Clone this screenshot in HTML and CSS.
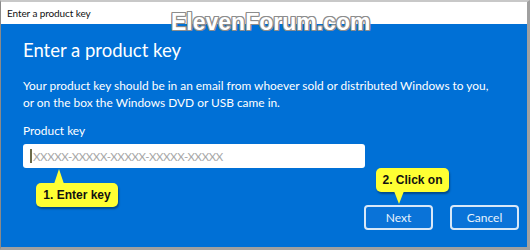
FILE: index.html
```html
<!DOCTYPE html>
<html lang="en">
<head>
  <meta charset="UTF-8" />
  <title>Enter a product key</title>
  <link rel="stylesheet" href="styles.css">
</head>
<body>
  <div class="window">
    <div class="titlebar">Enter a product key</div>
    <div class="content">
      <h1 class="heading">Enter a product key</h1>
      <p class="intro">Your product key should be in an email from whoever sold or distributed Windows to you,<br>or on the box the Windows DVD or USB came in.</p>
      <div class="label">Product key</div>
      <div class="keyInput"><span class="caret"></span><span class="placeholder">XXXXX-XXXXX-XXXXX-XXXXX-XXXXX</span></div>
      <div class="buttons">
        <button class="btn">Next</button>
        <button class="btn">Cancel</button>
      </div>
    </div>

    <div class="watermark">ElevenForum.com</div>

    <div class="callout callout-up">1. Enter key</div>
    <div class="callout callout-down">2. Click on</div>
  </div>
</body>
</html>
```

FILE: styles.css
```css
html, body {
  margin: 0;
  padding: 0;
}

body {
  width: 530px;
  height: 250px;
  overflow: hidden;
  background: #9a9a9a;
  font-family: Lato, "Noto Sans", sans-serif;
}

.window {
  position: relative;
  box-sizing: border-box;
  width: 530px;
  height: 250px;
  border-top: 2px solid #c8c8c8;
  border-left: 1px solid #8a8a8a;
  border-right: 3px solid #a0a0a0;
  border-bottom: 3px solid #a0a0a0;
  background: #0070d6;
  display: flex;
  flex-direction: column;
}

.titlebar {
  height: 22px;
  background: #fff;
  color: #111;
  font-size: 10px;
  line-height: 22px;
  padding-left: 6px;
  letter-spacing: -0.1px;
}

.content {
  flex: 1;
  padding: 13px 0 0 22px;
  color: #fff;
  display: flex;
  flex-direction: column;
}

.heading {
  margin: 0;
  font-size: 18.5px;
  font-weight: 400;
  line-height: 26px;
}

.intro {
  margin: 14px 0 0;
  font-size: 11.9px;
  line-height: 17px;
}

.label {
  margin-top: 11px;
  font-size: 11.9px;
  line-height: 17px;
}

.keyInput {
  margin-top: 5px;
  width: 342px;
  height: 24px;
  background: #fff;
  border-radius: 3px;
  display: flex;
  align-items: center;
  padding-left: 7px;
  box-sizing: border-box;
}

.caret {
  width: 2px;
  height: 14px;
  background: #6b6b4a;
  margin-right: 1px;
}

.placeholder {
  color: #a8a8a8;
  font-size: 11.5px;
  letter-spacing: -0.4px;
}

.buttons {
  display: flex;
  justify-content: flex-end;
  gap: 17px;
  margin-top: 37px;
  padding-right: 8px;
}

.btn {
  width: 69px;
  height: 25px;
  background: #0a73d8;
  border: 2px solid #d8e8f8;
  border-radius: 4px;
  color: #e8f2fc;
  font-family: Lato, "Noto Sans", sans-serif;
  font-size: 12px;
  padding: 0;
}

.watermark {
  position: absolute;
  left: 170px;
  top: 7px;
  font-family: "Liberation Sans", Arial, sans-serif;
  font-weight: bold;
  font-size: 23px;
  color: #fff;
  text-shadow:
    -1px -1px 0 #8c8c8c, 1px -1px 0 #8c8c8c,
    -1px 1px 0 #8c8c8c, 1px 1px 0 #8c8c8c,
    0 -1px 0 #8c8c8c, 0 1px 0 #8c8c8c,
    -1px 0 0 #8c8c8c, 1px 0 0 #8c8c8c;
}

.callout {
  position: absolute;
  background: #ffff33;
  border-radius: 5px;
  color: #111;
  font-family: "Liberation Sans", Arial, sans-serif;
  font-weight: bold;
  font-size: 12px;
  line-height: 24px;
  text-align: center;
  box-shadow: 1px 2px 2px rgba(0, 0, 0, 0.35);
}

.callout::after {
  content: "";
  position: absolute;
  border-left: 5px solid transparent;
  border-right: 5px solid transparent;
}

.callout-up {
  left: 35px;
  top: 181px;
  width: 82px;
}

.callout-up::after {
  left: 18px;
  top: -14px;
  border-bottom: 15px solid #ffff33;
}

.callout-down {
  left: 375px;
  top: 166px;
  width: 73px;
}

.callout-down::after {
  left: 18px;
  bottom: -12px;
  border-top: 13px solid #ffff33;
}
```
